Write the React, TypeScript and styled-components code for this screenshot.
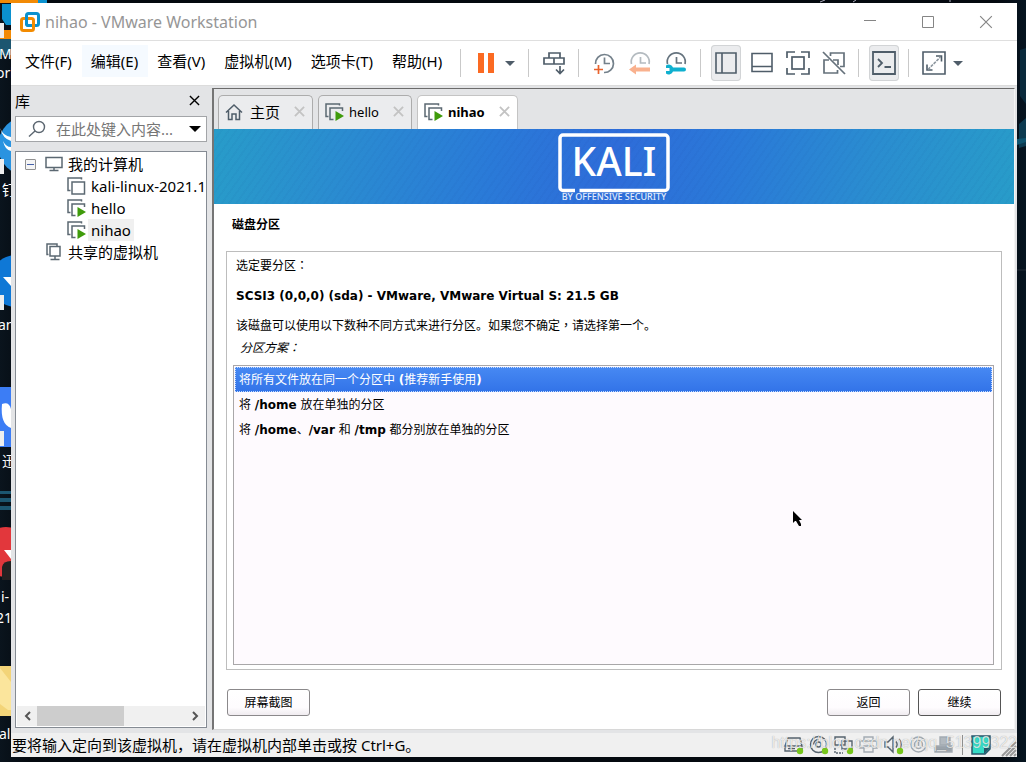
import React, { useState } from 'react';
import styled, { createGlobalStyle, css } from 'styled-components';

const uiFont = "'Noto Sans', 'Noto Sans CJK SC', sans-serif";
const guestFont = "'DejaVu Sans', 'Noto Sans CJK SC', sans-serif";
const slate = '#4f5d69';
const green = '#3f9b0b';

const GlobalStyle = createGlobalStyle`
  *, *::before, *::after { box-sizing: border-box; }
  body { margin: 0; background: #060d15; font-family: ${uiFont}; color: #000; }
  button, input { font: inherit; color: inherit; }
  button { margin: 0; padding: 0; border: 0; background: none; cursor: default; }
  svg { display: block; flex: none; }
`;

/* ---------- desktop ---------- */

const Desktop = styled.div`
  position: relative;
  display: flex;
  min-height: 100vh;
  padding: 3px 9px 5px 11px;
  overflow: hidden;
  background: linear-gradient(90deg, #0a141d, #04090f 3%, #04090f 97%, #061420);
`;

const Wallpaper = styled.svg`
  position: absolute;
  top: 0;
  left: 0;
`;

const WallpaperEdge = styled.svg`
  position: absolute;
  top: 0;
  right: 0;
`;

const AppWindow = styled.div`
  position: relative;
  flex: 1;
  min-width: 0;
  display: flex;
  flex-direction: column;
  background: #fff;
`;

/* ---------- title bar ---------- */

const TitleBar = styled.header`
  display: flex;
  align-items: center;
  height: 38px;
  padding: 0 19px 0 9px;
  border-bottom: 1px solid #dfdfdf;
`;

const WindowTitle = styled.h1`
  flex: 1;
  margin: 0 0 0 5px;
  font-size: 16px;
  line-height: 22px;
  font-weight: 400;
  color: #969696;
`;

const WindowControls = styled.div`
  display: flex;
  gap: 34px;
`;

const WindowControl = styled.button`
  width: 24px;
  height: 24px;
  display: grid;
  place-items: center;
`;

/* ---------- menu and toolbar ---------- */

const CommandBar = styled.div`
  display: flex;
  align-items: center;
  height: 45px;
  padding-left: 5px;
  border-bottom: 1px solid #dcdcdc;
`;

const Menu = styled.nav`
  display: flex;
  padding-bottom: 4px;
`;

const MenuItem = styled.button<{ $hot?: boolean }>`
  height: 32px;
  padding: 0 10px 0 9px;
  font-size: 15px;
  line-height: 22px;
  white-space: nowrap;
  background: ${p => (p.$hot ? '#f5faff' : 'none')};
`;

const Separator = styled.span`
  width: 1px;
  height: 28px;
  margin: 0 10px 0 9px;
  background: #c9c9c9;

  ${Menu} + & { margin-left: 8px; }
`;

const ToolGroup = styled.div`
  display: flex;
  gap: 6px;
`;

const ToolButton = styled.button<{ $on?: boolean }>`
  width: 30px;
  height: 36px;
  display: grid;
  place-items: center;
  border-radius: 4px;
  ${p => p.$on && css`
    background: #ebecee;
    box-shadow: inset 0 0 0 1px #d2d4d6;
  `}
`;

const DropButton = styled.button`
  width: 18px;
  height: 36px;
  display: grid;
  place-items: center;
`;

/* ---------- body ---------- */

const Body = styled.div`
  flex: 1;
  display: flex;
  min-height: 0;
  padding: 2px 2px 3px 0;
  background: #e3e4e6;
`;

const Sidebar = styled.aside`
  width: 201px;
  flex: none;
  display: flex;
  flex-direction: column;
  padding: 0 5px 2px 4px;
`;

const SidebarHead = styled.div`
  display: flex;
  align-items: center;
  justify-content: space-between;
  height: 28px;
  padding: 0 7px 3px 0;
  font-size: 15px;
  line-height: 22px;
`;

const SearchBox = styled.label`
  display: flex;
  align-items: center;
  gap: 10px;
  height: 26px;
  padding: 0 5px 0 12px;
  border: 1px solid #a3a5a8;
  background: #fff;
`;

const SearchInput = styled.input`
  flex: 1;
  min-width: 0;
  height: 22px;
  padding: 0;
  border: 0;
  outline: 0;
  font-size: 15px;
  background: transparent;
  &::placeholder { color: #767676; opacity: 1; }
`;

const TreePanel = styled.div`
  flex: 1;
  display: flex;
  flex-direction: column;
  justify-content: space-between;
  margin-top: 9px;
  padding: 1px;
  border: 1px solid #858b93;
  background: #fff;
`;

const Tree = styled.ul`
  margin: 0;
  padding: 0;
  list-style: none;
  overflow: hidden;
`;

const TreeItem = styled.li<{ $depth: number }>`
  display: flex;
  align-items: center;
  gap: 2px;
  height: 22px;
  padding-left: ${p => [8, 28, 50][p.$depth]}px;
  font-size: 15px;
  line-height: 22px;
  white-space: nowrap;
`;

const TreeLabel = styled.span<{ $selected?: boolean }>`
  padding: 0 3px;
  background: ${p => (p.$selected ? '#f0f0f0' : 'none')};
`;

const Expander = styled.button`
  width: 11px;
  height: 11px;
  margin-right: 7px;
  display: grid;
  place-items: center;
  border: 1px solid #919191;
  border-radius: 1px;
  background: #f4f4f4;
`;

const ScrollBar = styled.div`
  display: flex;
  height: 20px;
  background: #f0f0f0;
`;

const ScrollArrow = styled.button`
  width: 20px;
  display: grid;
  place-items: center;
`;

const ScrollTrack = styled.div`
  flex: 1;
`;

const ScrollThumb = styled.div`
  width: 59%;
  height: 100%;
  background: #cdcdcd;
`;

const Workspace = styled.main`
  flex: 1;
  min-width: 0;
  display: flex;
  flex-direction: column;
  border: solid;
  border-width: 1px 1px 1px 2px;
  border-color: #6b6b6b #f4f4f4 #d8d8d8 #757575;
`;

const TabStrip = styled.div`
  display: flex;
  align-items: flex-end;
  gap: 5px;
  height: 40px;
  padding-left: 4px;
`;

const Tab = styled.div<{ $active?: boolean }>`
  display: flex;
  align-items: center;
  height: 34px;
  padding: 0 7px 2px 6px;
  border: 1px solid #acacac;
  border-bottom: 0;
  border-radius: 5px 5px 0 0;
  background: ${p => (p.$active ? '#fff' : '#ebecee')};
  border-color: ${p => (p.$active ? '#c4c4c4' : '#acacac')};
`;

const TabLabel = styled.button<{ $active?: boolean; $large?: boolean }>`
  margin: 0 14px 0 ${p => (p.$large ? 7 : 5)}px;
  font-size: ${p => (p.$large ? 15 : 13)}px;
  line-height: 20px;
  font-weight: ${p => (p.$active ? 700 : 400)};
`;

/* ---------- guest display ---------- */

const Banner = styled.div`
  display: flex;
  justify-content: center;
  height: 75px;
  background:
    repeating-linear-gradient(125deg, rgba(0, 40, 120, 0.03) 0 2px, transparent 2px 6px),
    linear-gradient(100deg, #289cc9, #2a8dd0 15%, #2a7ad8 35%, #2e6cd9 50%, #2a7ad8 65%, #2a8dd0 82%, #289cc9);
`;

const Guest = styled.section`
  flex: 1;
  display: flex;
  flex-direction: column;
  padding: 11px 12px 13px;
  background: #fff;
  font-family: ${guestFont};
  font-size: 12px;
  line-height: 20px;
`;

const GuestTitle = styled.h2`
  margin: 0 6px 16px;
  font-size: 12px;
  font-weight: 700;
`;

const Panel = styled.div`
  flex: 1;
  display: flex;
  flex-direction: column;
  padding: 4px 7px 4px 6px;
  border: 1px solid #bdbdbd;
`;

const Line = styled.p<{ $strong?: boolean }>`
  margin: 0 3px 10px;
  font-weight: ${p => (p.$strong ? 700 : 400)};
`;

/* punctuation set in the middle of its square */
const Mark = styled.span`
  font-family: 'Noto Sans CJK TC', sans-serif;
  line-height: 1;
`;

const FieldLabel = styled.div`
  margin: -8px 7px 7px;
  font-style: italic;
`;

const OptionList = styled.ul`
  flex: 1;
  margin: 0;
  padding: 1px;
  list-style: none;
  border: 1px solid #a9a7a9;
  background: #fefafe;
`;

const Option = styled.li<{ $selected: boolean }>`
  height: 25px;
  padding: 0 3px;
  border: 1px dotted transparent;
  line-height: 24px;
  ${p => p.$selected && css`
    color: #fff;
    border-color: #c5dcff;
    background: linear-gradient(#4789f3, #3273e8) border-box;
  `}
`;

const Actions = styled.div`
  display: flex;
  gap: 8px;
  margin: 19px 1px 0;
`;

const GuestButton = styled.button<{ $primary?: boolean; $start?: boolean }>`
  width: 83px;
  height: 27px;
  border: 1px solid ${p => (p.$primary ? '#555' : '#8b898b')};
  border-radius: 3px;
  background: linear-gradient(#fff, #fefcfe 70%, #f0ecf0);
  margin-right: ${p => (p.$start ? 'auto' : '0')};
`;

const Pointer = styled.svg`
  position: absolute;
  left: 782px;
  top: 508px;
`;

/* ---------- status bar ---------- */

const StatusBar = styled.footer`
  display: flex;
  align-items: center;
  height: 24px;
  padding-left: 1px;
  background: #f0f0f0;
  font-size: 15px;
  line-height: 22px;
`;

const StatusText = styled.span`
  flex: 1;
  white-space: nowrap;
`;

const DeviceList = styled.div`
  display: flex;
  gap: 5px;
`;

const DeviceButton = styled.button`
  width: 20px;
  height: 20px;
  display: grid;
  place-items: center;
`;

const StatusRule = styled.span`
  width: 1px;
  height: 20px;
  margin: 0 8px;
  background: #8e8e8e;
`;

const Watermark = styled.span`
  position: absolute;
  right: 0;
  bottom: 4px;
  font: 16px/20px 'Liberation Sans', sans-serif;
  color: rgba(255, 255, 255, 0.75);
  text-shadow: 0 0 1px rgba(0, 0, 0, 0.35);
  pointer-events: none;
`;

/* ---------- icons ---------- */

const Caret = ({ w = 10, color = slate }: { w?: number; color?: string }) => (
  <svg width={w} height={w / 2} viewBox="0 0 10 5"><path d="M0 0h10L5 5z" fill={color} /></svg>
);

const Cross = ({ size, color, width = 1 }: { size: number; color: string; width?: number }) => (
  <svg width={size} height={size} viewBox="0 0 12 12">
    <path d="M1 1l10 10M11 1L1 11" stroke={color} strokeWidth={width} />
  </svg>
);

const VmLogo = () => (
  <svg width="20" height="20" viewBox="0 0 20 20" fill="none" strokeWidth="3">
    <rect x="6.5" y="1.5" width="12" height="12" rx="2" stroke="#0b91cf" />
    <rect x="1.5" y="6.5" width="12" height="12" rx="2" stroke="#f38b00" />
    <path d="M6.5 5v6a2 2 0 0 0 2 2.5H11" stroke="#0b91cf" />
  </svg>
);

const VmIcon = ({ running }: { running?: boolean }) => (
  <svg width="19" height="18" viewBox="0 0 19 18" fill="none" stroke="#5b6872" strokeWidth="1.5">
    <path d="M3.5 13.5H1V1h13.5v1.5" />
    {running
      ? <><path d="M8.500 16.500H5V5h12.500v3" /><path d="M10.500 8l8.500 5-8.500 5z" fill={green} stroke="none" /></>
      : <rect x="5" y="5" width="12.500" height="12" />}
  </svg>
);

const HomeIcon = () => (
  <svg width="18" height="18" viewBox="0 0 18 18" fill="none" stroke={slate} strokeWidth="1.5">
    <path d="M1 9.500L9 2l8 7.500M3.500 8v8.500H7V11h4v5.500h3.500V8" />
  </svg>
);

const MonitorIcon = () => (
  <svg width="18" height="16" viewBox="0 0 18 16" fill="none" stroke="#5b6872" strokeWidth="1.500">
    <rect x="1" y="1.500" width="16" height="10" /><path d="M9 11.500v3M4.500 14.500h9" />
  </svg>
);

const SharedIcon = () => (
  <svg width="18" height="18" viewBox="0 0 18 18" fill="none" stroke="#5b6872" strokeWidth="1.500">
    <path d="M3.500 11.500H2V1h10v2" /><rect x="5" y="3.500" width="10" height="9.500" /><path d="M10 13v3.500M5.500 16.500h9" />
  </svg>
);

const SearchIcon = () => (
  <svg width="18" height="18" viewBox="0 0 18 18" fill="none" stroke="#5b6670" strokeWidth="1.400">
    <circle cx="11" cy="7" r="5.500" /><path d="M7 11l-6 5.500" />
  </svg>
);

const PauseIcon = () => (
  <svg width="18" height="22" viewBox="0 0 18 22"><path d="M1 1h6v20H1zM11 1h6v20h-6z" fill="#fb6a22" /></svg>
);

const SendKeysIcon = () => (
  <svg width="24" height="24" viewBox="0 0 24 24" fill="none" stroke={slate} strokeWidth="1.700">
    <path d="M7 2h11v5H7zM2 7h10v6H2zM12 7h10v6H12z" /><path d="M18 15v7M14 18.500l4 4 4-4" />
  </svg>
);

const ClockIcon = ({ kind }: { kind: 'add' | 'revert' | 'manage' }) => (
  <svg width="24" height="24" viewBox="0 0 24 24" fill="none" strokeWidth="1.700">
    {kind === 'add' ? (
      <>
        <path d="M3.500 13a9 9 0 1 1 8.500 8.500" stroke="#74818b" />
        <path d="M12.500 6.500v6H18" stroke="#74818b" />
        <path d="M6.500 14v9M2 18.500h9" stroke="#e9632d" />
      </>
    ) : (
      <>
        <path d="M3.500 13a9 9 0 1 1 17.500 0" stroke={kind === 'revert' ? '#b4bbc0' : '#65737e'} />
        <path d="M12.500 6v6H18" stroke={kind === 'revert' ? '#b4bbc0' : '#65737e'} />
        {kind === 'revert'
          ? <path d="M1 18.500l7-5V16.500h14v4H8v3z" fill="#f9b18e" />
          : <path d="M2 14.500a4.500 4.500 0 0 1 7 2h11a2 2 0 0 1 0 4H9a4.500 4.500 0 0 1-7 2v-2.500h3.500v-3H2z" fill="#0fb0cf" />}
      </>
    )}
  </svg>
);

const LibraryIcon = () => (
  <svg width="22" height="22" viewBox="0 0 22 22" fill="none" stroke={slate} strokeWidth="1.600">
    <path d="M1 1h20v20H1zM7 1v20" />
  </svg>
);

const ThumbBarIcon = () => (
  <svg width="22" height="22" viewBox="0 0 22 22" fill="none" stroke={slate} strokeWidth="1.600">
    <path d="M1 1.500h20v18H1zM1 14.500h20" />
  </svg>
);

const FullScreenIcon = () => (
  <svg width="24" height="24" viewBox="0 0 24 24" fill="none" stroke={slate} strokeWidth="1.700">
    <path d="M1 7V1h8M15 1h8v6M23 17v6h-8M9 23H1v-6" /><rect x="6" y="6" width="12" height="12" />
  </svg>
);

const UnityIcon = () => (
  <svg width="24" height="24" viewBox="0 0 24 24" fill="none" stroke="#65717b" strokeWidth="1.700">
    <path d="M8.500 5V2H22v13.500h-4M11 9h5v5M7 9H2v13h13.500v-3" /><path d="M1 1l22 22" />
  </svg>
);

const ConsoleIcon = () => (
  <svg width="24" height="24" viewBox="0 0 24 24" fill="none" stroke={slate} strokeWidth="1.800">
    <path d="M1 1h22v22H1z" /><path d="M6 8l4 4-4 4M12.500 16H19" />
  </svg>
);

const StretchIcon = () => (
  <svg width="24" height="24" viewBox="0 0 24 24" fill="none" stroke={slate} strokeWidth="1.600">
    <path d="M1 1h22v22H1zM14 5h5.500v5.500M5 13.500V19h5.500" /><path d="M6 18.500L18.500 6" strokeDasharray="3 1" stroke="#8c969e" />
  </svg>
);

const deviceArt: Record<string, { dim?: boolean; art: React.ReactNode }> = {
  '硬盘': { art: <path d="M4 3h12l2 8v5H1v-5zM1 11h17M4 13.500h7" /> },
  'CD/DVD': { art: <><circle cx="9.500" cy="9.500" r="8" /><circle cx="9.500" cy="9.500" r="2.500" /><path d="M4.500 9.500a5 5 0 0 1 5-5" /></> },
  '网络适配器': { art: <><path d="M1 2h10v8H1zM8 6h10v8H8z" /><path d="M1 13v5h8" strokeDasharray="2 1" /></> },
  '打印机': { dim: true, art: <path d="M5 6V2h9v4M5 13H1V6h17v7h-4M5 11h9v6H5z" /> },
  '声卡': { art: <path d="M1 7h3l5-5v15l-5-5H1zM12 6.500a5 5 0 0 1 0 6M15 4a8 8 0 0 1 0 11" /> },
  'USB 控制器': { dim: true, art: <><circle cx="9.500" cy="9.500" r="7.500" /><circle cx="9.500" cy="9.500" r="4" /><path d="M9.500 7v4" /></> },
  '显示器': { dim: true, art: <><path d="M6 2h10v8H6z" fill="#b2b9bf" /><path d="M1 11h17v6H1z" fill="#9aa3ab" /></> },
};

const DeviceIcon = ({ name }: { name: string }) => {
  const d = deviceArt[name];
  return (
    <svg width="20" height="20" viewBox="0 0 20 20" fill="none" stroke={d.dim ? '#a3abb2' : '#55636e'} strokeWidth="1.400">
      {d.art}
      {!d.dim && <circle cx="16" cy="16" r="3.200" fill="#77c61c" stroke="none" />}
    </svg>
  );
};

const KaliLogo = () => (
  <svg width="112" height="75" viewBox="0 0 112 75" fill="none">
    <path d="M17 61.500H5a3 3 0 0 1-3-3V9a3 3 0 0 1 3-3h102a3 3 0 0 1 3 3v49.500a3 3 0 0 1-3 3H21.500" stroke="#fff" strokeWidth="3.500" />
    <text x="56" y="47" textAnchor="middle" fontFamily="'Noto Sans', sans-serif" fontWeight="500" fontSize="39" fill="#fff">KALI</text>
    <text x="56" y="71" textAnchor="middle" fontFamily="'Noto Sans', sans-serif" fontWeight="500" fontSize="9" fill="#e3edfc">BY OFFENSIVE SECURITY</text>
  </svg>
);

const DesktopArt = () => (
  <>
    <Wallpaper width="1026" height="762" viewBox="0 0 1026 762" aria-hidden>
      <path d="M0 30h11v25H0zM0 491h11v3H0zM0 498h11v4H0zM0 506h11v4H0z" fill="#1c5670" />
      <path d="M0 0h38v3H0zM0 30h11v9H0z" fill="#f28a05" />
      <path d="M2 4h9v21H6l-4-6zM38 0h9v3h-9z" fill="#0b91cf" />
      <circle cx="28" cy="146" r="30" fill="#2a93e0" />
      <path d="M0 128q3 8 11 9v4q-8-2-11-13zM3 141q3 6 8 6v4q-6-1-8-10z" fill="#fff" />
      <circle cx="16" cy="281" r="26" fill="#0f78d6" />
      <path d="M3 277h8v9z" fill="#fff" />
      <path d="M0 387h11v60H0z" fill="#3c7df5" />
      <path d="M2 404q7-3 9 5v19q-11-4-9-24z" fill="#fff" />
      <circle cx="6" cy="552" r="25" fill="#e2373c" />
      <path d="M4 550h7v9z" fill="#fff" />
      <path d="M2 567q1-6 9-6v19H2z" fill="#222" />
      <path d="M0 666h11v50H0z" fill="#f3d478" />
      <path d="M0 668l11 14v28H8l-8-6z" fill="#fbe59c" />
      <path d="M0 23h4v15H0zM0 159h4v15H0zM0 295h4v15H0zM0 431h4v15H0z" fill="#eee" />
      <g fill="#fff" fontFamily="'Noto Sans', 'Noto Sans CJK SC', sans-serif" fontSize="14">
        <text x="-1" y="59">M</text><text x="-4" y="78">ork</text><text x="2" y="195">钉</text>
        <text x="-2" y="330">an</text><text x="2" y="466">迅</text><text x="1" y="602">i-</text>
        <text x="-4" y="623">21</text><text x="-1" y="739">al</text>
      </g>
      <path d="M820 2l5-2M853 2l3-2M950 0v2" stroke="#aab" />
    </Wallpaper>
    <WallpaperEdge width="9" height="762" viewBox="0 0 9 762" aria-hidden>
      <path d="M3 50l6-2v56l-6-8z" fill="#0a2a3c" />
      <path d="M2 124l7-6v28l-7 2z" fill="#0c3a50" />
      <path d="M0 139l9-1v4l-9 3z" fill="#0f536e" />
      <path d="M0 270h9" stroke="#222d36" />
    </WallpaperEdge>
  </>
);

/* ---------- data ---------- */

const menus = ['文件(F)', '编辑(E)', '查看(V)', '虚拟机(M)', '选项卡(T)', '帮助(H)'];

const schemes: React.ReactNode[] = [
  <>将所有文件放在同一个分区中 <b>(</b>推荐新手使用<b>)</b></>,
  <>将 <b>/home</b> 放在单独的分区</>,
  <>将 <b>/home</b>、<b>/var</b> 和 <b>/tmp</b> 都分别放在单独的分区</>,
];

export default function App() {
  const [scheme, setScheme] = useState(0);

  return (
    <>
      <GlobalStyle />
      <Desktop>
        <DesktopArt />
        <AppWindow>
          <TitleBar>
            <VmLogo />
            <WindowTitle>nihao - VMware Workstation</WindowTitle>
            <WindowControls>
              <WindowControl aria-label="最小化"><svg width="12" height="12"><path d="M0 4.500h12" stroke="#858585" /></svg></WindowControl>
              <WindowControl aria-label="最大化"><svg width="12" height="12"><path d="M.5.5h11v11H.5z" fill="none" stroke="#858585" /></svg></WindowControl>
              <WindowControl aria-label="关闭"><Cross size={14} color="#858585" /></WindowControl>
            </WindowControls>
          </TitleBar>

          <CommandBar>
            <Menu>
              {menus.map((m, i) => <MenuItem key={m} $hot={i === 1}>{m}</MenuItem>)}
            </Menu>
            <Separator />
            <ToolButton aria-label="挂起"><PauseIcon /></ToolButton>
            <DropButton aria-label="电源选项"><Caret /></DropButton>
            <Separator />
            <ToolButton aria-label="发送 Ctrl+Alt+Del"><SendKeysIcon /></ToolButton>
            <Separator />
            <ToolGroup>
              <ToolButton aria-label="拍摄快照"><ClockIcon kind="add" /></ToolButton>
              <ToolButton aria-label="恢复快照"><ClockIcon kind="revert" /></ToolButton>
              <ToolButton aria-label="管理快照"><ClockIcon kind="manage" /></ToolButton>
            </ToolGroup>
            <Separator />
            <ToolGroup>
              <ToolButton $on aria-label="显示库"><LibraryIcon /></ToolButton>
              <ToolButton aria-label="缩略图栏"><ThumbBarIcon /></ToolButton>
              <ToolButton aria-label="全屏"><FullScreenIcon /></ToolButton>
              <ToolButton aria-label="Unity"><UnityIcon /></ToolButton>
            </ToolGroup>
            <Separator />
            <ToolButton $on aria-label="控制台视图"><ConsoleIcon /></ToolButton>
            <Separator />
            <ToolButton aria-label="拉伸"><StretchIcon /></ToolButton>
            <DropButton aria-label="拉伸选项"><Caret /></DropButton>
          </CommandBar>

          <Body>
            <Sidebar>
              <SidebarHead>
                <span>库</span>
                <button aria-label="关闭库"><Cross size={11} color="#000" width={1.5} /></button>
              </SidebarHead>
              <SearchBox>
                <SearchIcon />
                <SearchInput aria-label="搜索" placeholder="在此处键入内容..." />
                <Caret w={12} color="#000" />
              </SearchBox>
              <TreePanel>
                <Tree>
                  <TreeItem $depth={0}>
                    <Expander aria-label="折叠"><svg width="7" height="1"><path d="M0 .5h7" stroke="#4560a8" /></svg></Expander>
                    <MonitorIcon /><TreeLabel>我的计算机</TreeLabel>
                  </TreeItem>
                  <TreeItem $depth={2}><VmIcon /><TreeLabel>kali-linux-2021.1</TreeLabel></TreeItem>
                  <TreeItem $depth={2}><VmIcon running /><TreeLabel>hello</TreeLabel></TreeItem>
                  <TreeItem $depth={2}><VmIcon running /><TreeLabel $selected>nihao</TreeLabel></TreeItem>
                  <TreeItem $depth={1}><SharedIcon /><TreeLabel>共享的虚拟机</TreeLabel></TreeItem>
                </Tree>
                <ScrollBar>
                  <ScrollArrow aria-label="向左滚动"><svg width="7" height="10"><path d="M6 1L2 5l4 4" fill="none" stroke="#555" strokeWidth="2" /></svg></ScrollArrow>
                  <ScrollTrack><ScrollThumb /></ScrollTrack>
                  <ScrollArrow aria-label="向右滚动"><svg width="7" height="10"><path d="M1 1l4 4-4 4" fill="none" stroke="#555" strokeWidth="2" /></svg></ScrollArrow>
                </ScrollBar>
              </TreePanel>
            </Sidebar>

            <Workspace>
              <TabStrip>
                <Tab><HomeIcon /><TabLabel $large>主页</TabLabel><button aria-label="关闭主页"><Cross size={11} color="#c3c3c3" width={2} /></button></Tab>
                <Tab><VmIcon running /><TabLabel>hello</TabLabel><button aria-label="关闭 hello"><Cross size={11} color="#c3c3c3" width={2} /></button></Tab>
                <Tab $active><VmIcon running /><TabLabel $active>nihao</TabLabel><button aria-label="关闭 nihao"><Cross size={11} color="#c3c3c3" width={2} /></button></Tab>
              </TabStrip>
              <Banner><KaliLogo /></Banner>
              <Guest>
                <GuestTitle>磁盘分区</GuestTitle>
                <Panel>
                  <Line>选定要分区<Mark>：</Mark></Line>
                  <Line $strong>SCSI3 (0,0,0) (sda) - VMware, VMware Virtual S: 21.5 GB</Line>
                  <Line>该磁盘可以使用以下数种不同方式来进行分区。如果您不确定<Mark>，</Mark>请选择第一个。</Line>
                  <FieldLabel id="scheme-label">分区方案<Mark>：</Mark></FieldLabel>
                  <OptionList role="listbox" aria-labelledby="scheme-label">
                    {schemes.map((s, i) => (
                      <Option key={i} role="option" aria-selected={scheme === i} $selected={scheme === i} onClick={() => setScheme(i)}>{s}</Option>
                    ))}
                  </OptionList>
                </Panel>
                <Actions>
                  <GuestButton $start>屏幕截图</GuestButton>
                  <GuestButton>返回</GuestButton>
                  <GuestButton $primary>继续</GuestButton>
                </Actions>
              </Guest>
            </Workspace>
          </Body>

          <StatusBar>
            <StatusText>要将输入定向到该虚拟机，请在虚拟机内部单击或按 Ctrl+G。</StatusText>
            <DeviceList>
              {Object.keys(deviceArt).map(n => <DeviceButton key={n} aria-label={n}><DeviceIcon name={n} /></DeviceButton>)}
            </DeviceList>
            <StatusRule />
            <DeviceButton aria-label="消息日志">
              <svg width="20" height="20" viewBox="0 0 20 20"><path d="M1 1h18v13l-5 5H1z" fill="#35dbc5" stroke="#28566a" strokeWidth="1.500" /><path d="M13 19v-6h6z" fill="#28566a" /></svg>
            </DeviceButton>
            <svg width="26" height="24" viewBox="0 0 26 24"><path d="M11 23L25 9M15 23l10-10M19 23l6-6M23 23l2-2" stroke="#999" strokeWidth="2" /></svg>
            <Watermark>https://blog.csdn.net/qq_51399322</Watermark>
          </StatusBar>
          <Pointer width="10" height="16" viewBox="0 0 10 16" aria-hidden>
            <path d="M0 0v12l2-2h1l3 5h2V13L6 9h3z" />
          </Pointer>
        </AppWindow>
      </Desktop>
    </>
  );
}
